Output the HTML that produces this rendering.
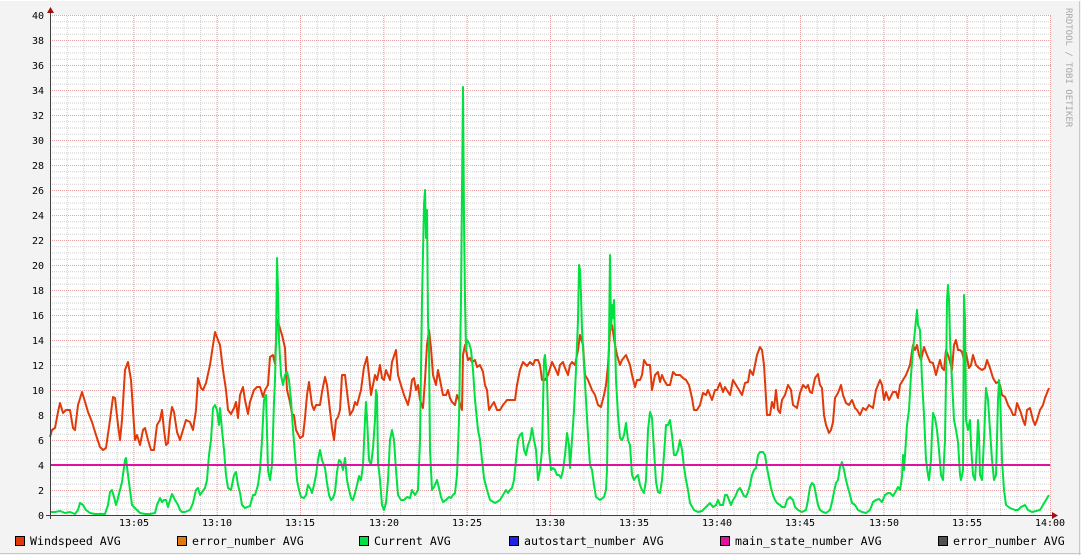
<!DOCTYPE html>
<html><head><meta charset="utf-8"><style>
html,body{margin:0;padding:0;}
body{width:1081px;height:555px;background:#f3f3f3;overflow:hidden;position:relative;font-family:"DejaVu Sans Mono","Liberation Mono",monospace;}
svg{position:absolute;left:0;top:0;}
</style></head><body>
<svg width="1081" height="555" viewBox="0 0 1081 555" xmlns="http://www.w3.org/2000/svg">
<defs>
<pattern id="minorH" x="0" y="15" width="1000" height="6.25" patternUnits="userSpaceOnUse">
<line x1="0" y1="0.5" x2="1000" y2="0.5" stroke="#cfcfcf" stroke-width="1" stroke-dasharray="1,1"/>
</pattern>
<pattern id="minorV" x="50" y="0" width="16.667" height="600" patternUnits="userSpaceOnUse">
<line x1="0.5" y1="0" x2="0.5" y2="600" stroke="#cfcfcf" stroke-width="1" stroke-dasharray="1,1"/>
</pattern>
<pattern id="majH" x="0" y="15" width="1000" height="25" patternUnits="userSpaceOnUse">
<line x1="0" y1="0.5" x2="1000" y2="0.5" stroke="#e8a0a0" stroke-width="1" stroke-dasharray="1,1"/>
</pattern>
<pattern id="majV" x="50" y="0" width="83.333" height="600" patternUnits="userSpaceOnUse">
<line x1="0.5" y1="0" x2="0.5" y2="600" stroke="#e8a0a0" stroke-width="1" stroke-dasharray="1,1"/>
</pattern>
</defs>
<rect x="0" y="0" width="1081" height="555" fill="#f3f3f3"/>
<line x1="1079.5" y1="0" x2="1079.5" y2="555" stroke="#c8c8c8"/>
<line x1="0" y1="553.5" x2="1081" y2="553.5" stroke="#c8c8c8"/>
<line x1="0" y1="0.5" x2="1081" y2="0.5" stroke="#fff"/>
<rect x="50" y="15" width="1001" height="500" fill="#fff"/>
<rect x="50" y="15" width="1001" height="500" fill="url(#minorH)"/>
<rect x="50" y="15" width="1001" height="500" fill="url(#minorV)"/>
<rect x="50" y="15" width="1001" height="500" fill="url(#majH)"/>
<rect x="50" y="15" width="1001" height="500" fill="url(#majV)"/>

<g font-size="10" fill="#000" text-anchor="end">
<text x="44" y="19">40</text><text x="44" y="44">38</text><text x="44" y="69">36</text><text x="44" y="94">34</text>
<text x="44" y="119">32</text><text x="44" y="144">30</text><text x="44" y="169">28</text><text x="44" y="194">26</text>
<text x="44" y="219">24</text><text x="44" y="244">22</text><text x="44" y="269">20</text><text x="44" y="294">18</text>
<text x="44" y="319">16</text><text x="44" y="344">14</text><text x="44" y="369">12</text><text x="44" y="394">10</text>
<text x="44" y="419">8</text><text x="44" y="444">6</text><text x="44" y="469">4</text><text x="44" y="494">2</text><text x="44" y="519">0</text>
</g>
<g font-size="10" fill="#000" text-anchor="middle">
<text x="134" y="526">13:05</text><text x="217" y="526">13:10</text><text x="300" y="526">13:15</text>
<text x="384" y="526">13:20</text><text x="467" y="526">13:25</text><text x="550" y="526">13:30</text>
<text x="634" y="526">13:35</text><text x="717" y="526">13:40</text><text x="800" y="526">13:45</text>
<text x="884" y="526">13:50</text><text x="967" y="526">13:55</text><text x="1050" y="526">14:00</text>
</g>

<polyline fill="none" stroke="#e03a0a" stroke-width="2" stroke-linejoin="round" points="50,437 52,430 55,428 58,412 60,403 63,413 66,410 70,410 73,428 75,430 78,405 82,392 86,405 88,412 92,422 96,435 100,447 103,450 106,448 110,420 113,397 115,398 118,425 120,440 122,420 125,370 128,362 131,380 133,410 135,440 137,435 140,445 143,430 145,428 148,440 151,450 154,450 157,425 160,420 162,410 164,430 166,445 168,443 170,420 172,407 174,412 177,432 180,440 183,430 186,420 190,422 193,430 196,410 198,378 201,388 203,390 206,383 210,365 213,345 215,332 218,340 220,345 223,370 226,390 228,410 231,414 234,408 236,402 238,418 240,395 243,387 245,400 248,414 250,402 254,390 257,387 260,387 263,397 265,390 268,385 270,357 273,355 275,364 277,320 279,325 282,335 285,348 287,390 290,402 292,414 294,415 296,430 300,438 303,436 305,418 307,395 309,382 312,405 314,410 316,405 320,405 322,392 325,377 327,385 329,402 332,428 334,440 336,420 338,417 340,410 342,375 345,375 348,400 350,415 353,410 355,402 357,405 361,390 364,367 367,357 369,375 371,395 375,375 377,380 380,365 382,378 384,380 386,370 390,380 392,362 396,350 398,375 400,382 404,395 406,400 408,405 410,395 412,380 414,378 416,390 418,385 420,400 423,408 425,380 427,345 429,330 431,348 433,375 436,385 438,370 440,380 443,395 446,395 448,390 450,398 452,402 455,405 457,395 459,400 462,410 463,355 465,345 468,360 470,358 472,362 475,360 477,367 480,365 483,372 485,385 487,390 489,410 492,405 494,402 497,410 500,410 503,405 507,400 510,400 512,400 515,400 517,385 520,370 523,362 527,366 530,362 533,365 535,360 538,360 540,365 542,380 545,380 548,375 552,362 555,368 558,375 560,365 563,362 565,368 568,375 570,365 572,362 575,365 578,350 580,335 583,345 585,375 588,380 592,390 595,395 598,405 601,407 604,395 606,385 608,365 610,330 612,325 615,345 617,355 620,365 622,360 626,355 630,365 632,375 635,387 637,380 640,380 642,375 644,360 647,365 650,365 652,390 655,375 658,372 660,382 662,375 664,380 667,385 670,385 673,372 676,375 680,375 683,378 686,380 689,385 692,398 694,410 697,410 700,405 703,393 706,395 708,390 710,395 712,400 715,390 717,390 720,383 723,392 725,387 728,392 730,395 733,380 736,385 739,390 742,395 745,383 748,382 750,370 753,375 757,355 760,347 762,350 764,365 767,415 770,415 772,402 774,408 776,390 778,410 780,413 782,400 785,395 788,385 791,390 793,405 797,408 800,393 803,385 806,388 808,385 810,392 812,393 815,378 818,374 820,385 822,388 824,415 826,425 829,433 831,430 833,422 835,398 838,393 841,385 843,395 846,403 849,405 852,400 855,408 857,410 860,415 863,408 866,410 869,405 873,408 876,390 880,380 882,385 884,400 886,392 889,400 893,392 896,392 898,398 900,385 903,380 906,375 908,370 910,365 913,345 915,350 917,345 919,355 921,360 924,347 927,355 930,362 933,363 936,375 938,367 940,360 942,368 944,370 946,350 949,358 952,370 954,345 956,340 958,350 960,350 962,352 964,360 966,353 969,368 971,365 973,355 976,365 979,368 982,370 985,368 987,360 990,368 993,378 996,383 998,382 1000,385 1002,395 1005,397 1008,405 1011,410 1013,415 1015,415 1017,403 1019,408 1021,413 1023,420 1025,425 1027,410 1030,408 1033,420 1035,425 1037,420 1040,410 1043,405 1045,398 1047,393 1049,388"/>

<polyline fill="none" stroke="#00e040" stroke-width="2" stroke-linejoin="round" points="50,512 55,512 60,511 65,513 70,512 75,514 78,510 80,503 83,505 86,510 90,513 95,514 100,514 105,514 108,505 110,492 112,490 114,497 116,505 118,498 120,490 122,482 125,460 126,458 128,475 130,490 132,505 134,507 137,510 140,513 145,514 150,514 155,513 157,505 160,498 162,502 164,500 166,500 168,507 170,500 172,494 175,500 178,505 180,510 182,512 185,512 190,510 193,503 196,490 198,488 200,495 202,492 205,488 207,480 209,455 211,440 213,408 215,405 217,410 219,425 220,408 222,430 224,450 226,475 228,488 231,490 234,475 236,472 238,485 240,493 242,505 245,508 250,506 253,495 255,495 258,485 260,470 262,440 264,400 266,395 268,470 270,480 272,465 274,402 275,380 276,340 277,258 278,290 279,340 281,375 283,385 285,375 287,372 289,380 291,400 293,430 295,455 297,480 299,490 301,497 304,498 306,495 308,485 310,488 312,493 314,485 316,475 318,460 320,450 322,460 325,468 327,483 329,495 331,500 333,498 335,492 337,472 339,460 341,462 343,470 345,458 347,480 349,490 351,498 353,500 355,493 357,485 359,476 361,480 363,465 365,420 366,402 367,418 369,460 371,465 373,448 375,420 376,390 377,395 378,462 380,480 382,505 384,510 386,503 388,480 390,440 392,430 394,440 396,470 398,495 401,500 404,500 407,497 410,498 412,490 415,495 418,490 420,440 422,300 424,205 425,190 426,238 427,210 428,320 429,350 430,450 432,490 434,487 437,480 439,488 441,497 443,502 446,500 449,497 451,498 453,495 455,493 457,475 459,420 461,300 462,190 463,87 464,220 465,300 466,350 467,340 469,343 471,350 473,370 475,400 478,430 480,440 482,460 484,478 487,490 490,500 495,503 500,500 503,495 506,490 508,493 510,490 512,488 514,480 516,460 518,440 520,435 522,433 524,450 526,455 528,445 530,440 532,428 534,440 536,450 538,480 540,470 542,450 544,360 545,355 547,380 549,450 551,470 553,468 555,470 557,475 559,475 561,478 563,470 565,455 567,433 569,445 570,468 572,440 574,410 576,370 578,320 579,265 580,270 581,295 582,330 584,365 586,400 588,435 590,465 592,470 594,485 596,497 600,500 604,497 606,490 607,470 609,340 610,255 611,330 612,305 613,318 614,300 616,380 618,415 620,438 622,440 624,435 626,423 628,440 630,445 632,475 634,480 636,477 638,475 640,485 642,490 644,493 646,480 648,430 650,412 652,418 654,450 656,482 658,492 660,493 662,480 664,455 666,425 668,425 670,420 672,435 674,455 676,455 678,450 680,440 682,450 684,467 686,480 688,490 690,503 694,510 698,512 702,511 706,507 710,503 713,507 716,505 718,500 720,505 723,505 725,495 727,495 729,500 731,505 733,500 735,497 738,490 740,488 742,492 744,496 746,497 748,492 750,485 752,475 754,470 756,468 758,455 760,452 763,452 765,455 767,468 769,478 771,488 773,495 775,500 777,503 780,505 782,507 785,507 787,500 790,497 793,500 795,507 798,510 802,512 806,510 808,500 810,487 812,483 814,485 816,495 818,505 820,510 823,512 826,513 830,510 832,502 834,492 836,483 838,480 840,467 842,462 844,470 846,480 848,488 850,495 852,503 855,505 858,510 862,512 866,513 870,510 873,502 876,500 879,499 882,502 885,495 888,493 890,493 893,496 896,491 898,487 900,490 902,477 903,455 904,470 905,455 907,425 909,410 911,375 913,350 915,330 917,310 918,325 920,330 922,380 924,415 926,460 928,475 929,480 931,460 932,432 933,413 935,418 937,430 939,450 941,475 943,480 945,440 946,380 947,300 948,285 949,300 950,340 952,380 954,420 956,430 958,442 960,475 961,480 963,470 964,295 965,320 966,420 968,430 970,420 971,445 973,475 975,480 977,445 978,420 979,435 980,475 982,480 984,440 986,388 988,400 990,430 992,460 994,480 996,475 998,400 999,380 1000,390 1002,460 1004,490 1006,505 1010,508 1015,510 1018,510 1021,507 1025,505 1028,510 1032,512 1036,511 1040,510 1043,505 1046,500 1049,495"/>

<line x1="50" y1="465" x2="1050" y2="465" stroke="#e010a0" stroke-width="2"/>

<line x1="50.5" y1="10" x2="50.5" y2="519" stroke="#404040" stroke-width="1"/>
<line x1="46" y1="515.5" x2="1054" y2="515.5" stroke="#404040" stroke-width="1"/>
<polygon points="47,13 54,13 50.5,7" fill="#a01010"/>
<polygon points="1052,512 1052,519 1058,515.5" fill="#a01010"/>

<text transform="translate(1066,8) rotate(90)" font-size="9" fill="#a8a8a8">RRDTOOL / TOBI OETIKER</text>

<g font-size="11.6" fill="#000">
<rect x="15.5" y="536.5" width="9" height="9" fill="#e03a0a" stroke="#000"/><text x="30" y="545">Windspeed AVG</text>
<rect x="177.5" y="536.5" width="9" height="9" fill="#e07a10" stroke="#000"/><text x="192" y="545">error_number AVG</text>
<rect x="359.5" y="536.5" width="9" height="9" fill="#00e040" stroke="#000"/><text x="374" y="545">Current AVG</text>
<rect x="509.5" y="536.5" width="9" height="9" fill="#2020e8" stroke="#000"/><text x="524" y="545">autostart_number AVG</text>
<rect x="720.5" y="536.5" width="9" height="9" fill="#e010a0" stroke="#000"/><text x="735" y="545">main_state_number AVG</text>
<rect x="938.5" y="536.5" width="9" height="9" fill="#505050" stroke="#000"/><text x="953" y="545">error_number AVG</text>
</g>
</svg>
</body></html>
